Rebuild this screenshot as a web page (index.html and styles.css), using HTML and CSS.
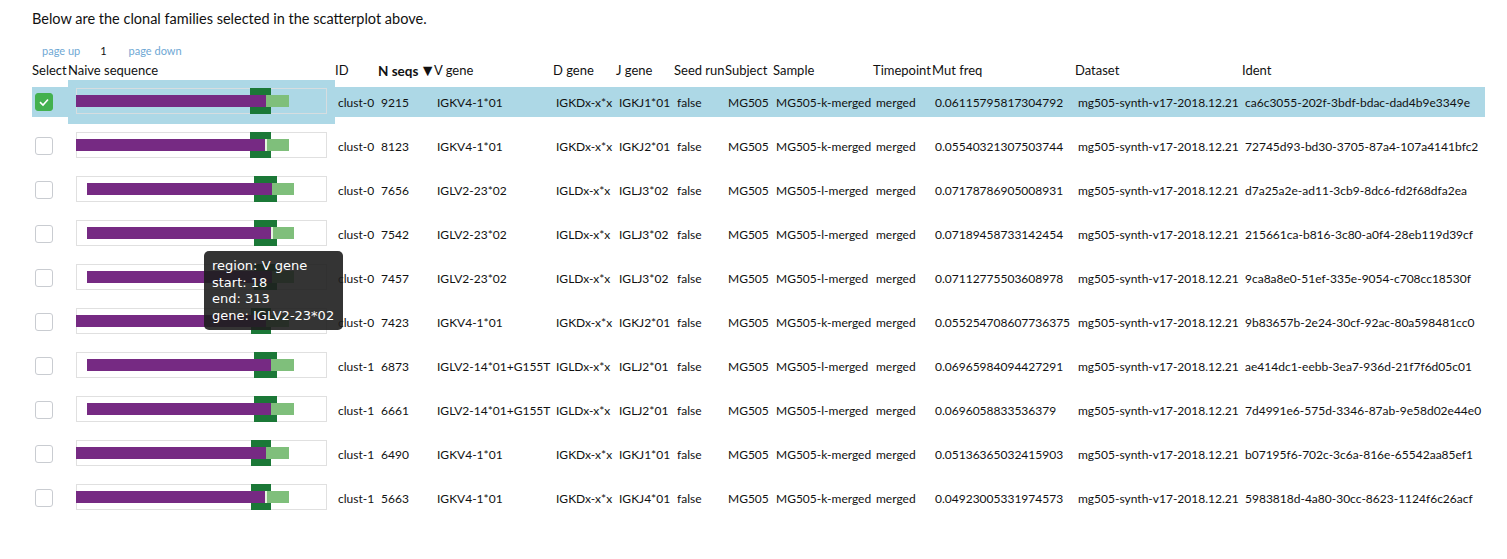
FILE: index.html
```html
<!DOCTYPE html>
<html>
<head>
<meta charset="utf-8">
<link rel="stylesheet" href="styles.css">
</head>
<body>
<div class="page">
  <p class="intro">Below are the clonal families selected in the scatterplot above.</p>
  <div class="pager">
    <span class="pglink">page up</span>
    <span class="pgnum">1</span>
    <span class="pglink">page down</span>
  </div>
  <table class="fam">
    <colgroup>
      <col class="c-sel"><col class="c-naive"><col class="c-id"><col class="c-nseq"><col class="c-v"><col class="c-d"><col class="c-j"><col class="c-seed"><col class="c-subj"><col class="c-samp"><col class="c-time"><col class="c-mut"><col class="c-ds"><col class="c-ident">
    </colgroup>
    <thead>
      <tr>
        <th>Select</th><th>Naive sequence</th><th>ID</th><th class="sorted">N seqs <span class="arrow">▼</span></th><th>V gene</th><th>D gene</th><th>J gene</th><th>Seed run</th><th>Subject</th><th>Sample</th><th>Timepoint</th><th>Mut freq</th><th>Dataset</th><th>Ident</th>
      </tr>
    </thead>
    <tbody>
      <tr class="selected">
        <td><span class="cb checked"><svg viewBox="0 0 18 18" width="18" height="18"><path d="M5 9.2 L8 12 L13 6.5" fill="none" stroke="#fff" stroke-width="1.6"/></svg></span></td>
        <td class="naive"><svg class="seq" width="251" height="26"><rect x="0.5" y="0.5" width="250" height="25" fill="none" stroke="#d6dde0"/><rect x="174" y="0" width="21" height="26" fill="#1b7837"/><rect x="0" y="7" width="190" height="12" fill="#762a83"/><rect x="190" y="7" width="23" height="12" fill="#7fbf7b"/></svg></td>
        <td>clust-0</td><td>9215</td><td>IGKV4-1*01</td><td>IGKDx-x*x</td><td>IGKJ1*01</td><td>false</td><td>MG505</td><td>MG505-k-merged</td><td>merged</td><td>0.06115795817304792</td><td>mg505-synth-v17-2018.12.21</td><td>ca6c3055-202f-3bdf-bdac-dad4b9e3349e</td>
      </tr>
      <tr>
        <td><span class="cb"></span></td>
        <td class="naive"><svg class="seq" width="251" height="26"><rect x="0.5" y="0.5" width="250" height="25" fill="#fff" stroke="#e0e0e0"/><rect x="174" y="0" width="21" height="26" fill="#1b7837"/><rect x="0" y="7" width="189" height="12" fill="#762a83"/><rect x="189" y="7" width="2" height="12" fill="#e5f5e0"/><rect x="191" y="7" width="22" height="12" fill="#7fbf7b"/></svg></td>
        <td>clust-0</td><td>8123</td><td>IGKV4-1*01</td><td>IGKDx-x*x</td><td>IGKJ2*01</td><td>false</td><td>MG505</td><td>MG505-k-merged</td><td>merged</td><td>0.05540321307503744</td><td>mg505-synth-v17-2018.12.21</td><td>72745d93-bd30-3705-87a4-107a4141bfc2</td>
      </tr>
      <tr>
        <td><span class="cb"></span></td>
        <td class="naive"><svg class="seq" width="251" height="26"><rect x="0.5" y="0.5" width="250" height="25" fill="#fff" stroke="#e0e0e0"/><rect x="178" y="0" width="23" height="26" fill="#1b7837"/><rect x="11" y="7" width="185" height="12" fill="#762a83"/><rect x="196" y="7" width="22" height="12" fill="#7fbf7b"/></svg></td>
        <td>clust-0</td><td>7656</td><td>IGLV2-23*02</td><td>IGLDx-x*x</td><td>IGLJ3*02</td><td>false</td><td>MG505</td><td>MG505-l-merged</td><td>merged</td><td>0.07178786905008931</td><td>mg505-synth-v17-2018.12.21</td><td>d7a25a2e-ad11-3cb9-8dc6-fd2f68dfa2ea</td>
      </tr>
      <tr>
        <td><span class="cb"></span></td>
        <td class="naive"><svg class="seq" width="251" height="26"><rect x="0.5" y="0.5" width="250" height="25" fill="#fff" stroke="#e0e0e0"/><rect x="178" y="0" width="23" height="26" fill="#1b7837"/><rect x="11" y="7" width="184" height="12" fill="#762a83"/><rect x="195" y="7" width="2" height="12" fill="#e5f5e0"/><rect x="197" y="7" width="21" height="12" fill="#7fbf7b"/></svg></td>
        <td>clust-0</td><td>7542</td><td>IGLV2-23*02</td><td>IGLDx-x*x</td><td>IGLJ3*02</td><td>false</td><td>MG505</td><td>MG505-l-merged</td><td>merged</td><td>0.07189458733142454</td><td>mg505-synth-v17-2018.12.21</td><td>215661ca-b816-3c80-a0f4-28eb119d39cf</td>
      </tr>
      <tr>
        <td><span class="cb"></span></td>
        <td class="naive"><svg class="seq" width="251" height="26"><rect x="0.5" y="0.5" width="250" height="25" fill="#fff" stroke="#e0e0e0"/><rect x="178" y="0" width="23" height="26" fill="#1b7837"/><rect x="11" y="7" width="185" height="12" fill="#762a83"/><rect x="196" y="7" width="22" height="12" fill="#7fbf7b"/></svg></td>
        <td>clust-0</td><td>7457</td><td>IGLV2-23*02</td><td>IGLDx-x*x</td><td>IGLJ3*02</td><td>false</td><td>MG505</td><td>MG505-l-merged</td><td>merged</td><td>0.07112775503608978</td><td>mg505-synth-v17-2018.12.21</td><td>9ca8a8e0-51ef-335e-9054-c708cc18530f</td>
      </tr>
      <tr>
        <td><span class="cb"></span></td>
        <td class="naive"><svg class="seq" width="251" height="26"><rect x="0.5" y="0.5" width="250" height="25" fill="#fff" stroke="#e0e0e0"/><rect x="175" y="0" width="20" height="26" fill="#1b7837"/><rect x="0" y="7" width="190" height="12" fill="#762a83"/><rect x="190" y="7" width="23" height="12" fill="#7fbf7b"/></svg></td>
        <td>clust-0</td><td>7423</td><td>IGKV4-1*01</td><td>IGKDx-x*x</td><td>IGKJ2*01</td><td>false</td><td>MG505</td><td>MG505-k-merged</td><td>merged</td><td>0.055254708607736375</td><td>mg505-synth-v17-2018.12.21</td><td>9b83657b-2e24-30cf-92ac-80a598481cc0</td>
      </tr>
      <tr>
        <td><span class="cb"></span></td>
        <td class="naive"><svg class="seq" width="251" height="26"><rect x="0.5" y="0.5" width="250" height="25" fill="#fff" stroke="#e0e0e0"/><rect x="178" y="0" width="23" height="26" fill="#1b7837"/><rect x="11" y="7" width="184" height="12" fill="#762a83"/><rect x="195" y="7" width="23" height="12" fill="#7fbf7b"/></svg></td>
        <td>clust-1</td><td>6873</td><td>IGLV2-14*01+G155T</td><td>IGLDx-x*x</td><td>IGLJ2*01</td><td>false</td><td>MG505</td><td>MG505-l-merged</td><td>merged</td><td>0.06965984094427291</td><td>mg505-synth-v17-2018.12.21</td><td>ae414dc1-eebb-3ea7-936d-21f7f6d05c01</td>
      </tr>
      <tr>
        <td><span class="cb"></span></td>
        <td class="naive"><svg class="seq" width="251" height="26"><rect x="0.5" y="0.5" width="250" height="25" fill="#fff" stroke="#e0e0e0"/><rect x="178" y="0" width="23" height="26" fill="#1b7837"/><rect x="11" y="7" width="184" height="12" fill="#762a83"/><rect x="195" y="7" width="23" height="12" fill="#7fbf7b"/></svg></td>
        <td>clust-1</td><td>6661</td><td>IGLV2-14*01+G155T</td><td>IGLDx-x*x</td><td>IGLJ2*01</td><td>false</td><td>MG505</td><td>MG505-l-merged</td><td>merged</td><td>0.0696058833536379</td><td>mg505-synth-v17-2018.12.21</td><td>7d4991e6-575d-3346-87ab-9e58d02e44e0</td>
      </tr>
      <tr>
        <td><span class="cb"></span></td>
        <td class="naive"><svg class="seq" width="251" height="26"><rect x="0.5" y="0.5" width="250" height="25" fill="#fff" stroke="#e0e0e0"/><rect x="175" y="0" width="20" height="26" fill="#1b7837"/><rect x="0" y="7" width="190" height="12" fill="#762a83"/><rect x="190" y="7" width="23" height="12" fill="#7fbf7b"/></svg></td>
        <td>clust-1</td><td>6490</td><td>IGKV4-1*01</td><td>IGKDx-x*x</td><td>IGKJ1*01</td><td>false</td><td>MG505</td><td>MG505-k-merged</td><td>merged</td><td>0.05136365032415903</td><td>mg505-synth-v17-2018.12.21</td><td>b07195f6-702c-3c6a-816e-65542aa85ef1</td>
      </tr>
      <tr>
        <td><span class="cb"></span></td>
        <td class="naive"><svg class="seq" width="251" height="26"><rect x="0.5" y="0.5" width="250" height="25" fill="#fff" stroke="#e0e0e0"/><rect x="175" y="0" width="20" height="26" fill="#1b7837"/><rect x="0" y="7" width="189" height="12" fill="#762a83"/><rect x="189" y="7" width="2" height="12" fill="#e5f5e0"/><rect x="191" y="7" width="22" height="12" fill="#7fbf7b"/></svg></td>
        <td>clust-1</td><td>5663</td><td>IGKV4-1*01</td><td>IGKDx-x*x</td><td>IGKJ4*01</td><td>false</td><td>MG505</td><td>MG505-k-merged</td><td>merged</td><td>0.04923005331974573</td><td>mg505-synth-v17-2018.12.21</td><td>5983818d-4a80-30cc-8623-1124f6c26acf</td>
      </tr>
    </tbody>
  </table>
  <div class="tooltip">
    <div>region: V gene</div>
    <div>start: 18</div>
    <div>end: 313</div>
    <div>gene: IGLV2-23*02</div>
  </div>
</div>
</body>
</html>
```

FILE: styles.css
```css
html, body {
  margin: 0;
  padding: 0;
  background: #fff;
}
body {
  font-family: Lato, "Liberation Sans", sans-serif;
  color: #111;
}
.page {
  position: relative;
  padding: 10px 0 0 32px;
}
.intro {
  margin: 0;
  font-size: 14.5px;
  line-height: 18px;
}
.pager {
  display: flex;
  align-items: center;
  margin-top: 14px;
  height: 16px;
  font-size: 11px;
  padding-left: 10px;
}
.pglink {
  color: #6fa8d4;
}
.pgnum {
  color: #111;
  margin: 0 22px 0 20px;
}
.fam {
  border-collapse: collapse;
  table-layout: fixed;
  width: 1453px;
  margin-top: 2px;
  font-size: 12px;
}
.c-sel { width: 36px; }
.c-naive { width: 267px; }
.c-id { width: 43px; }
.c-nseq { width: 56px; }
.c-v { width: 119px; }
.c-d { width: 63px; }
.c-j { width: 58px; }
.c-seed { width: 51px; }
.c-subj { width: 48px; }
.c-samp { width: 100px; }
.c-time { width: 59px; }
.c-mut { width: 143px; }
.c-ds { width: 167px; }
.c-ident { width: 243px; }
.fam th {
  text-align: left;
  font-weight: normal;
  font-size: 13px;
  padding: 0;
  height: 20px;
  white-space: nowrap;
  overflow: visible;
}
.fam th.sorted {
  font-weight: bold;
  font-size: 13.5px;
}
.arrow {
  font-size: 16px;
  line-height: 1;
  margin-left: -2px;
}
.fam td {
  height: 44px;
  padding: 0 0 0 3px;
  white-space: nowrap;
  overflow: visible;
  vertical-align: middle;
}
.fam td.naive {
  padding: 0;
  vertical-align: top;
}
.seq {
  display: block;
  margin: 8px 0 0 8px;
}
.selected td {
  background: linear-gradient(transparent 7px, #add8e6 7px, #add8e6 37px, transparent 37px);
}
.selected td.naive {
  background: #add8e6;
}
.cb {
  display: block;
  width: 16px;
  height: 16px;
  border: 1px solid #c9ccd1;
  border-radius: 3px;
  background: #fff;
}
.cb svg {
  display: block;
  margin: -1px;
}
.cb.checked {
  background: #43b14f;
  border-color: #43b14f;
}
.tooltip {
  position: absolute;
  left: 204px;
  top: 251px;
  width: 123px;
  padding: 7px 8px 6px 8px;
  background: rgba(30, 30, 30, 0.9);
  border-radius: 5px;
  color: #fff;
  font-family: "DejaVu Sans", sans-serif;
  font-size: 13px;
  line-height: 16.5px;
  white-space: nowrap;
}
```
